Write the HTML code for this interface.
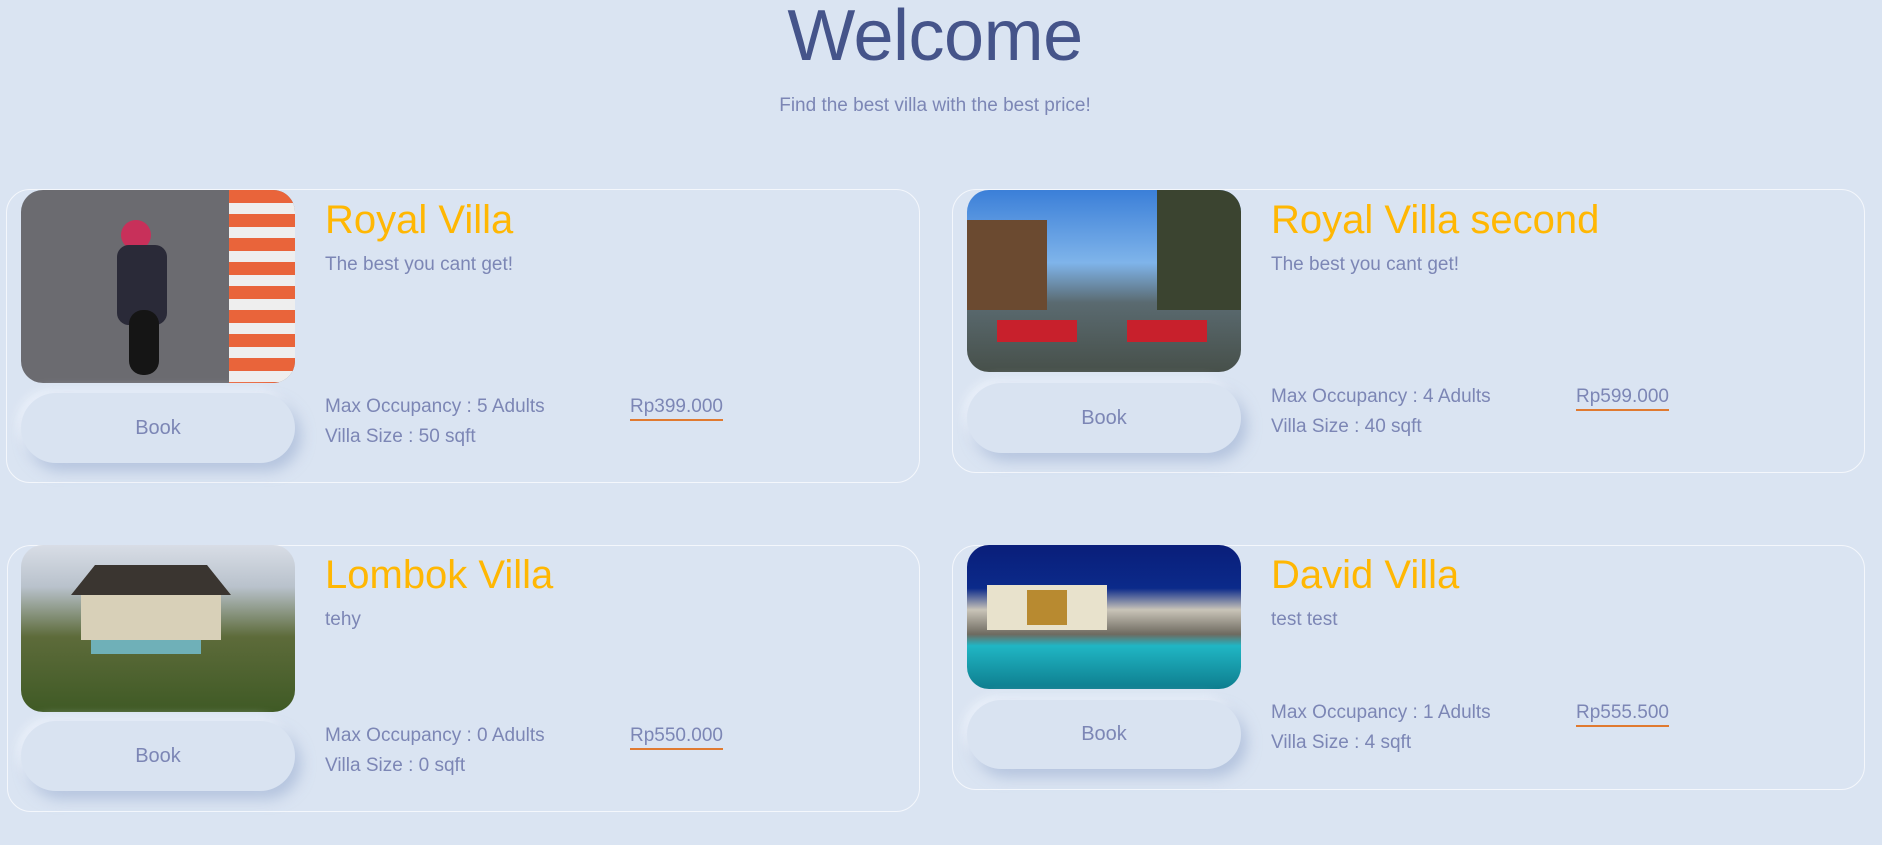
<!DOCTYPE html>
<html><head><meta charset="utf-8"><style>
*{margin:0;padding:0;box-sizing:border-box}
body{width:1882px;height:845px;background:#dae4f2;font-family:"Liberation Sans",sans-serif;position:relative;overflow:hidden}
.h1{position:absolute;left:0;width:1870px;top:-9px;text-align:center;font-size:72px;line-height:90px;color:#45548a;letter-spacing:-0.5px}
.sub{position:absolute;left:0;width:1870px;top:95px;text-align:center;font-size:19px;color:#7c86b5}
.card{position:absolute;border:1.5px solid #f4f7fc;border-radius:24px}
.img{position:absolute;border-radius:22px;overflow:hidden}
.btn{position:absolute;border-radius:36px;background:#d9e3f1;box-shadow:6px 8px 14px rgba(150,170,205,.55),-4px -4px 10px rgba(240,245,252,.8);color:#7c86b5;font-size:20px;display:flex;align-items:center;justify-content:center}
.t{position:absolute;color:#ffb703;font-size:40px;line-height:48px;white-space:nowrap}
.d{position:absolute;color:#7c86b5;font-size:19px;line-height:24px;white-space:nowrap}
.p{position:absolute;color:#7c86b5;font-size:19px;line-height:24px;border-bottom:2px solid #e07a30}
</style></head><body>
<div class="h1">Welcome</div>
<div class="sub">Find the best villa with the best price!</div>

<div class="card" style="left:6px;top:189px;width:914px;height:294px"></div>
<div class="img" style="left:21px;top:190px;width:274px;height:193px;background:#6b6b70">
 <div style="position:absolute;left:208px;top:0;width:66px;height:193px;background:repeating-linear-gradient(180deg,#e9643a 0 13px,#eee 13px 24px)"></div>
 <div style="position:absolute;left:100px;top:30px;width:30px;height:30px;border-radius:50%;background:#c8305a"></div>
 <div style="position:absolute;left:96px;top:55px;width:50px;height:80px;border-radius:12px;background:#2a2a38"></div>
 <div style="position:absolute;left:108px;top:120px;width:30px;height:65px;border-radius:14px;background:#151515"></div>
</div>
<div class="btn" style="left:21px;top:393px;width:274px;height:70px">Book</div>
<div class="t" style="left:325px;top:196px">Royal Villa</div>
<div class="d" style="left:325px;top:253px">The best you cant get!</div>
<div class="d" style="left:325px;top:395px">Max Occupancy : 5 Adults</div>
<div class="d" style="left:325px;top:425px">Villa Size : 50 sqft</div>
<div class="p" style="left:630px;top:395px">Rp399.000</div>

<div class="card" style="left:952px;top:189px;width:913px;height:284px"></div>
<div class="img" style="left:967px;top:190px;width:274px;height:182px;background:linear-gradient(180deg,#3b7fd8 0%,#7fb4ea 40%,#5a6a70 62%,#47504a 100%)">
 <div style="position:absolute;left:0;top:30px;width:80px;height:90px;background:#6b4a30"></div>
 <div style="position:absolute;left:190px;top:0;width:84px;height:120px;background:#3b4430"></div>
 <div style="position:absolute;left:30px;top:130px;width:80px;height:22px;background:#c8202c"></div>
 <div style="position:absolute;left:160px;top:130px;width:80px;height:22px;background:#c8202c"></div>
</div>
<div class="btn" style="left:967px;top:383px;width:274px;height:70px">Book</div>
<div class="t" style="left:1271px;top:196px">Royal Villa second</div>
<div class="d" style="left:1271px;top:253px">The best you cant get!</div>
<div class="d" style="left:1271px;top:385px">Max Occupancy : 4 Adults</div>
<div class="d" style="left:1271px;top:415px">Villa Size : 40 sqft</div>
<div class="p" style="left:1576px;top:385px">Rp599.000</div>

<div class="card" style="left:7px;top:545px;width:913px;height:267px"></div>
<div class="img" style="left:21px;top:545px;width:274px;height:167px;background:linear-gradient(180deg,#d8dde6 0%,#b9c2cc 25%,#5d6b3a 55%,#3f5a25 100%)">
 <div style="position:absolute;left:50px;top:20px;width:160px;height:30px;background:#3a3530;clip-path:polygon(15% 0,85% 0,100% 100%,0 100%)"></div>
 <div style="position:absolute;left:60px;top:50px;width:140px;height:45px;background:#d8d0b8"></div>
 <div style="position:absolute;left:70px;top:95px;width:110px;height:14px;background:#6fb0b8"></div>
</div>
<div class="btn" style="left:21px;top:721px;width:274px;height:70px">Book</div>
<div class="t" style="left:325px;top:551px">Lombok Villa</div>
<div class="d" style="left:325px;top:608px">tehy</div>
<div class="d" style="left:325px;top:724px">Max Occupancy : 0 Adults</div>
<div class="d" style="left:325px;top:754px">Villa Size : 0 sqft</div>
<div class="p" style="left:630px;top:724px">Rp550.000</div>

<div class="card" style="left:952px;top:545px;width:913px;height:245px"></div>
<div class="img" style="left:967px;top:545px;width:274px;height:144px;background:linear-gradient(180deg,#0a1e7a 0%,#0b2a8a 30%,#c9c4b8 45%,#6e6a60 62%,#20b6c4 70%,#0e7d8e 100%)">
 <div style="position:absolute;left:20px;top:40px;width:120px;height:45px;background:#e8e2cc"></div>
 <div style="position:absolute;left:60px;top:45px;width:40px;height:35px;background:#b88a30"></div>
</div>
<div class="btn" style="left:967px;top:700px;width:274px;height:69px">Book</div>
<div class="t" style="left:1271px;top:551px">David Villa</div>
<div class="d" style="left:1271px;top:608px">test test</div>
<div class="d" style="left:1271px;top:701px">Max Occupancy : 1 Adults</div>
<div class="d" style="left:1271px;top:731px">Villa Size : 4 sqft</div>
<div class="p" style="left:1576px;top:701px">Rp555.500</div>
</body></html>
